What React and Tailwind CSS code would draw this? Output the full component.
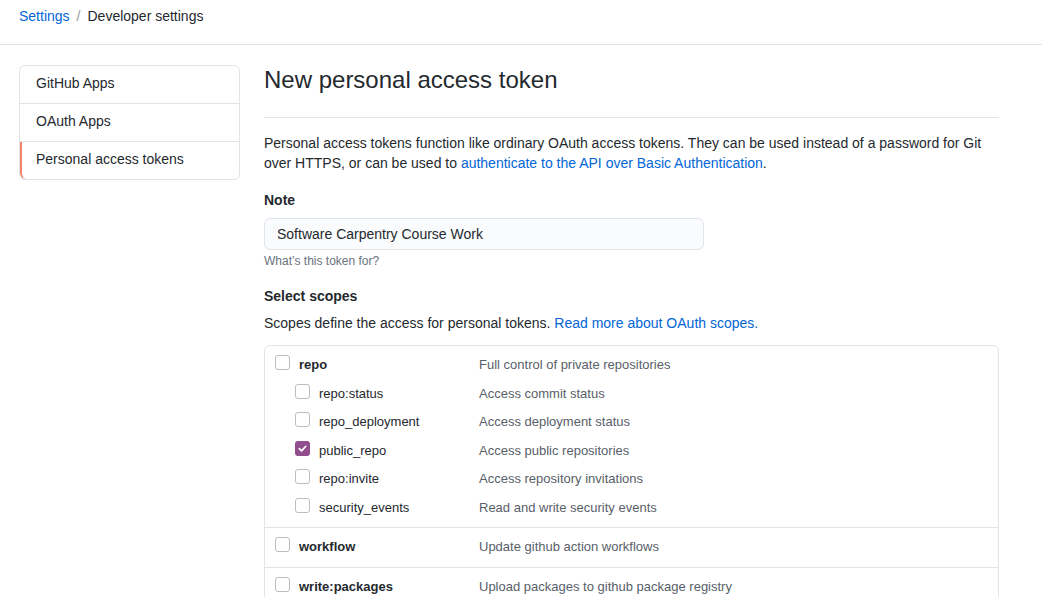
import React from 'react';

const repoScopes = [
  { name: 'repo:status', desc: 'Access commit status' },
  { name: 'repo_deployment', desc: 'Access deployment status' },
  { name: 'public_repo', desc: 'Access public repositories', checked: true },
  { name: 'repo:invite', desc: 'Access repository invitations' },
  { name: 'security_events', desc: 'Read and write security events' },
];

function Checkbox({ checked }) {
  if (checked) {
    return (
      <span className="w-[15px] h-[15px] mb-[5px] rounded-[3px] bg-[#924e8c] flex items-center justify-center shrink-0">
        <svg width="11" height="11" viewBox="0 0 12 12" fill="none">
          <path d="M2.5 6.2 L5 8.6 L9.6 3.6" stroke="white" strokeWidth="1.8" strokeLinecap="round" strokeLinejoin="round" />
        </svg>
      </span>
    );
  }
  return <span className="w-[15px] h-[15px] mb-[5px] rounded-[3px] border border-[#bdbdbd] bg-white shrink-0"></span>;
}

export default function App() {
  return (
    <div className="min-h-screen bg-white text-[#24292e] font-['Liberation_Sans',Arial,sans-serif]">
      {/* Breadcrumb */}
      <div className="h-[45px] border-b border-[#e1e4e8] pt-[6px] pl-[19px] text-sm leading-5">
        <a className="text-[#0366d6]">Settings</a>
        <span className="text-[#959da5] mx-[7px]">/</span>
        <span>Developer settings</span>
      </div>

      <div className="flex items-start gap-6 pl-[19px] pt-[20px]">
        {/* Sidebar */}
        <nav className="w-[221px] border border-[#e1e4e8] rounded-md text-sm shrink-0">
          <div className="h-[38px] flex items-center px-4 pb-1 border-b border-[#e1e4e8]">GitHub Apps</div>
          <div className="h-[38px] flex items-center px-4 pb-1 border-b border-[#e1e4e8]">OAuth Apps</div>
          <div className="h-[37px] flex items-center pl-[14px] pr-4 pb-1 border-l-2 border-[#f9826c] rounded-bl-md">
            Personal access tokens
          </div>
        </nav>

        {/* Main */}
        <div className="w-[735px]">
          <h1 className="text-2xl leading-[30px] font-normal pb-[22px] border-b border-[#e1e4e8]">
            New personal access token
          </h1>

          <p className="mt-[15px] text-sm leading-5">
            Personal access tokens function like ordinary OAuth access tokens. They can be used instead of a password for Git
            over HTTPS, or can be used to{' '}
            <a className="text-[#0366d6]">authenticate to the API over Basic Authentication</a>.
          </p>

          <div className="mt-[17px] text-sm leading-5 font-bold">Note</div>
          <div className="mt-2 w-[440px] h-8 border border-[#e1e4e8] bg-[#fafbfc] rounded-md px-3 flex items-center text-sm">
            Software Carpentry Course Work
          </div>
          <div className="mt-[3px] text-xs leading-4 text-[#6a737d]">What’s this token for?</div>

          <div className="mt-[17px] text-sm leading-5 font-bold">Select scopes</div>
          <p className="mt-[7px] text-sm leading-5">
            Scopes define the access for personal tokens.{' '}
            <a className="text-[#0366d6]">Read more about OAuth scopes.</a>
          </p>

          <div className="mt-3 border border-[#e1e4e8] rounded-md text-[13px] leading-5">
            {/* repo group */}
            <div className="pl-[10px] pt-[9px] pb-[9px] border-b border-[#e1e4e8]">
              <div className="flex items-center">
                <div className="w-[204px] flex items-center gap-[9px]">
                  <Checkbox />
                  <span className="font-bold">repo</span>
                </div>
                <span className="text-[#586069]">Full control of private repositories</span>
              </div>
              {repoScopes.map((s) => (
                <div key={s.name} className="flex items-center mt-[8.5px]">
                  <div className="w-[204px] flex items-center gap-[9px] pl-5">
                    <Checkbox checked={s.checked} />
                    <span>{s.name}</span>
                  </div>
                  <span className="text-[#586069]">{s.desc}</span>
                </div>
              ))}
            </div>

            <div className="pl-[10px] pt-[9px] pb-[10px] border-b border-[#e1e4e8] flex items-center">
              <div className="w-[204px] flex items-center gap-[9px]">
                <Checkbox />
                <span className="font-bold">workflow</span>
              </div>
              <span className="text-[#586069]">Update github action workflows</span>
            </div>

            <div className="pl-[10px] pt-[9px] pb-[11px] flex items-center">
              <div className="w-[204px] flex items-center gap-[9px]">
                <Checkbox />
                <span className="font-bold">write:packages</span>
              </div>
              <span className="text-[#586069]">Upload packages to github package registry</span>
            </div>
          </div>
        </div>
      </div>
    </div>
  );
}
